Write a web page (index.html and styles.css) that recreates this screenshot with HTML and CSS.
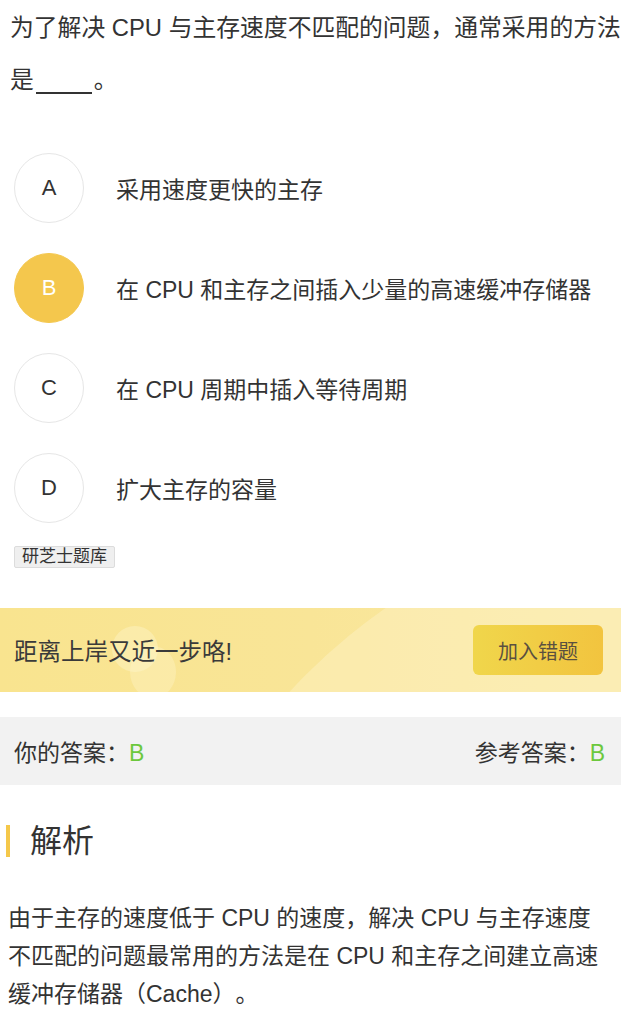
FILE: index.html
```html
<!DOCTYPE html>
<html lang="zh-CN">
<head>
<meta charset="utf-8">
<title>题目</title>
<link rel="stylesheet" href="styles.css">
</head>
<body>
<div class="page">
  <div class="question">为了解决 CPU 与主存速度不匹配的问题，通常采用的方法是<span class="blank"></span>。</div>

  <ul class="options">
    <li class="option"><span class="circle">A</span><span class="opt-text">采用速度更快的主存</span></li>
    <li class="option selected"><span class="circle">B</span><span class="opt-text">在 CPU 和主存之间插入少量的高速缓冲存储器</span></li>
    <li class="option"><span class="circle">C</span><span class="opt-text">在 CPU 周期中插入等待周期</span></li>
    <li class="option"><span class="circle">D</span><span class="opt-text">扩大主存的容量</span></li>
  </ul>

  <div class="tag-row"><span class="tag">研芝士题库</span></div>

  <div class="banner">
    <span class="deco deco-curve"></span>
    <span class="deco deco-dot1"></span>
    <span class="deco deco-dot2"></span>
    <span class="banner-text">距离上岸又近一步咯!</span>
    <span class="banner-btn">加入错题</span>
  </div>

  <div class="answers">
    <span>你的答案：<em class="ok">B</em></span>
    <span>参考答案：<em class="ok">B</em></span>
  </div>

  <h2 class="section-title">解析</h2>

  <p class="analysis">由于主存的速度低于 CPU 的速度，解决 CPU 与主存速度不匹配的问题最常用的方法是在 CPU 和主存之间建立高速缓冲存储器（Cache）。</p>
</div>
</body>
</html>
```

FILE: styles.css
```css
* { box-sizing: border-box; }

html, body {
  margin: 0;
  padding: 0;
  background: #ffffff;
}

body {
  font-family: "Liberation Sans", "Noto Sans CJK SC", sans-serif;
  color: #333333;
  text-autospace: no-autospace;
  text-spacing-trim: space-all;
}

.page {
  width: 621px;
}

.question {
  font-size: 23.8px;
  line-height: 52px;
  padding: 2px 0 0 10px;
}

.blank {
  display: inline-block;
  width: 56px;
  height: 2px;
  margin: 0 2px;
  background: #333333;
  vertical-align: -6px;
}

.options {
  list-style: none;
  margin: 47px 0 0 0;
  padding: 0 0 0 14px;
  display: flex;
  flex-direction: column;
  gap: 30px;
}

.option {
  display: flex;
  align-items: center;
  gap: 32px;
  height: 70px;
}

.circle {
  flex: none;
  width: 70px;
  height: 70px;
  border-radius: 50%;
  border: 1px solid #e6e6e6;
  display: flex;
  align-items: center;
  justify-content: center;
  font-size: 22px;
  color: #333333;
}

.option.selected .circle {
  background: #f4c74d;
  border-color: #f4c74d;
  color: #ffffff;
}

.opt-text {
  font-size: 23px;
  color: #333333;
  white-space: nowrap;
}

.tag-row {
  padding: 0 0 0 14px;
  margin-top: 23px;
  height: 22px;
}

.tag {
  display: inline-block;
  height: 22px;
  line-height: 20px;
  padding: 0 7px;
  font-size: 17px;
  color: #333333;
  background: #efefef;
  border: 1px solid #dcdcdc;
  border-radius: 2px;
}

.banner {
  position: relative;
  overflow: hidden;
  margin-top: 40px;
  height: 84px;
  display: flex;
  align-items: center;
  justify-content: space-between;
  padding: 0 18px 0 14px;
  background: linear-gradient(90deg, #f9e48f 0%, #f9e597 50%, #fae9a3 100%);
}

.deco {
  position: absolute;
  pointer-events: none;
}

.deco-curve {
  left: 135px;
  top: -105px;
  width: 1170px;
  height: 1170px;
  border-radius: 50%;
  background: rgba(255, 250, 222, 0.3);
}

.deco-dot1 {
  left: 112px;
  top: 18px;
  width: 46px;
  height: 46px;
  border-radius: 50%;
  background: rgba(255, 248, 215, 0.35);
}

.deco-dot2 {
  left: 130px;
  top: 38px;
  width: 46px;
  height: 52px;
  border-radius: 50%;
  background: rgba(255, 248, 215, 0.3);
}

.banner-text {
  position: relative;
  font-size: 23.5px;
  color: #3a3a3a;
}

.banner-btn {
  position: relative;
  width: 130px;
  height: 50px;
  border-radius: 6px;
  display: flex;
  align-items: center;
  justify-content: center;
  font-size: 20px;
  color: #5a5040;
  background: linear-gradient(90deg, #f0d64b 0%, #f2c43f 100%);
}

.answers {
  margin-top: 25px;
  height: 68px;
  display: flex;
  align-items: center;
  justify-content: space-between;
  padding: 0 16px 0 14px;
  background: #f2f2f2;
  font-size: 23px;
  color: #333333;
}

.ok {
  font-style: normal;
  color: #6cc83d;
}

.section-title {
  margin: 40px 0 0 6px;
  padding: 0 0 0 20px;
  height: 32px;
  line-height: 32px;
  border-left: 4px solid #f5c84a;
  font-size: 32px;
  font-weight: normal;
  color: #333333;
}

.analysis {
  margin: 42px 0 0 0;
  padding: 0 8px;
  font-size: 23px;
  line-height: 38px;
  color: #333333;
}
```
